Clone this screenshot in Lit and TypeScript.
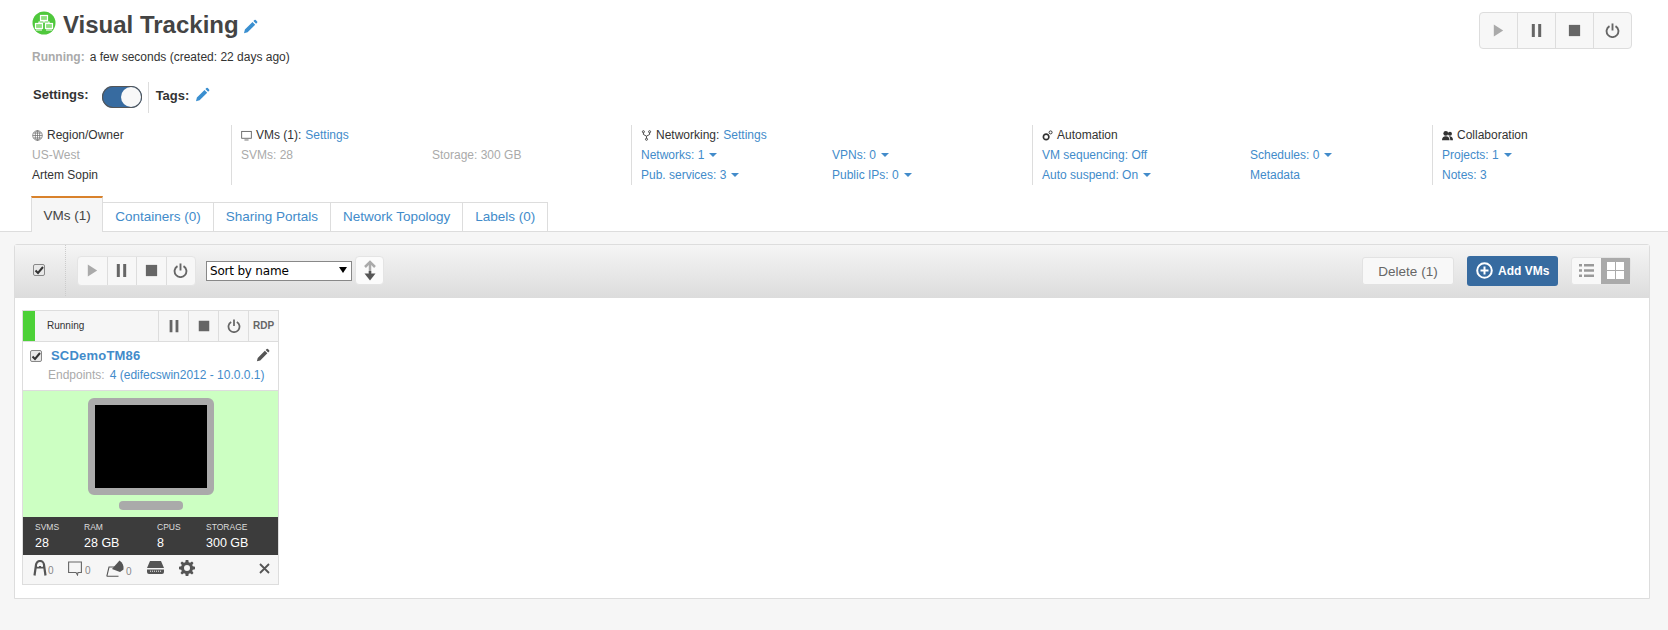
import { LitElement, html, css, svg } from "lit";
import { customElement } from "lit/decorators.js";

const pencil = svg`<path d="M2 14.2l.9-3.6 7.6-7.6 2.7 2.7-7.6 7.6zM11.4 2.1l1-1a1 1 0 0 1 1.4 0l1.300 1.300a1 1 0 0 1 0 1.400l-1 1z"/>`;
const play = svg`<path d="M3 1.500l10 6.500-10 6.500z"/>`;
const pause = svg`<path d="M3 1h3.200v14H3zM9.800 1H13v14H9.800z"/>`;
const stop = svg`<path d="M2 2h12v12H2z"/>`;
const power = svg`<path d="M4.800 3.300a6.300 6.300 0 1 0 6.400 0" fill="none" stroke="currentColor" stroke-width="2"/><path d="M7 .5h2v7.500H7z"/>`;
const ic = (p: unknown, cls = "") => html`<svg class="ic ${cls}" viewBox="0 0 16 16" fill="currentColor">${p}</svg>`;
const caret = html`<i class="caret"></i>`;

@customElement("app-root")
export class AppRoot extends LitElement {
  static styles = css`
    :host { display: block; width: 1668px; height: 630px; overflow: hidden; background: #f6f6f6; font: 12px/20px "Liberation Sans", Arial, sans-serif; color: #333; }
    a { color: #428bca; text-decoration: none; }
    .ic { display: block; }
    .head { background: #fff; height: 232px; box-sizing: border-box; padding: 11px 0 0 32px; border-bottom: 1px solid #ddd; position: relative; }
    .toprow { display: flex; justify-content: space-between; align-items: flex-start; padding-right: 36px; height: 38px; }
    .title { display: flex; align-items: center; height: 24px; }
    .title h1 { margin: 3px 0 0 7px; font-size: 24px; line-height: 24px; font-weight: bold; color: #444; }
    .title .ic { width: 16px; height: 16px; color: #3a8fd0; margin: 7px 0 0 3px; }
    .btns { display: flex; border: 1px solid #ddd; border-radius: 4px; background: #f7f7f7; margin-top: 1px; }
    .btns span { width: 37px; height: 35px; display: flex; align-items: center; justify-content: center; color: #666; border-left: 1px solid #ddd; }
    .btns span:first-child { border-left: 0; }
    .btns .ic { width: 15px; height: 15px; }
    .btns .dim { color: #aaa; }
    .running { height: 20px; margin-top: -2px; display: flex; gap: 5px; }
    .running b { color: #aaa; }
    .settings { display: flex; align-items: center; height: 31px; margin-top: 15px; padding-left: 1px; font-weight: bold; font-size: 13px; }
    .settings .lbl { padding-bottom: 6px; }
    .toggle { width: 40px; height: 22px; border-radius: 11px; background: #376ba0; margin: 0 0 2px 13px; border: 0; position: relative; box-shadow: inset 0 0 0 1px #555; }
    .toggle i { position: absolute; right: 1px; top: 1px; width: 20px; height: 20px; border-radius: 50%; background: #f8f8f8; }
    .vsep { width: 1px; height: 31px; background: #ddd; margin: 0 7px 0 6px; }
    .settings .ic { width: 16px; height: 16px; color: #3a8fd0; margin: 0 0 6px 5px; }
    .stats { display: grid; grid-template-columns: 199px 400px 401px 400px 200px; margin-top: 12px; height: 60px; }
    .col { border-left: 1px solid #ddd; padding-left: 9px; display: grid; align-content: start; grid-auto-rows: 20px; }
    .col:first-child { border: 0; padding-left: 0; }
    .c2 { grid-template-columns: 191px 1fr; }
    .c3 { grid-template-columns: 208px 1fr; }
    .h { display: flex; align-items: center; gap: 4px; grid-column: 1 / -1; white-space: nowrap; }
    .h .ic { width: 11px; height: 11px; color: #444; }
    .mute { color: #aaa; }
    .caret { display: inline-block; border: 4px solid transparent; border-top-color: #428bca; border-bottom: 0; margin-left: 5px; vertical-align: 2px; }
    .tabs { display: flex; align-items: flex-end; position: absolute; left: 31px; bottom: -1px; }
    .tabs a { display: block; height: 28px; line-height: 28px; padding: 0 12px; font-size: 13.5px; border: 1px solid #ddd; border-left: 0; background: #fff; }
    .tabs a.on { height: 34px; line-height: 36px; color: #444; background: #f6f6f6; border-top: 2px solid #d9822b; border-bottom: 0; border-left: 1px solid #ddd; padding: 0 11.5px; }
    .panel { margin: 12px 18px 0 14px; border: 1px solid #ddd; border-radius: 3px 3px 0 0; background: #fff; height: 355px; box-sizing: border-box; }
    .bar { height: 53px; background: linear-gradient(#f5f5f5, #dcdcdc); display: flex; align-items: center; box-sizing: border-box; padding-bottom: 2px; }
    .cbbox { width: 12px; height: 12px; border: 1px solid #888; border-radius: 2px; background: #e8e8e8; display: flex; align-items: center; justify-content: center; box-sizing: border-box; color: #333; flex: none; }
    .cbbox svg { width: 10px; height: 10px; display: block; }
    .barcheck { width: 51px; height: 51px; display: flex; align-items: center; justify-content: center; border-right: 1px dotted #ccc; box-sizing: border-box; margin-right: 11px; padding: 0 8px 2px 5px; }
    .btns2 { display: flex; border-radius: 4px; background: #f7f7f7; border: 1px solid #e4e4e4; margin-right: 10px; }
    .btns2 span { width: 28.500px; height: 28px; display: flex; align-items: center; justify-content: center; color: #666; border-left: 1px solid #ddd; }
    .btns2 span:first-child { border: 0; }
    .btns2 .ic { width: 15px; height: 15px; }
    .btns2 .dim { color: #aaa; }
    .selwrap { position: relative; display: block; width: 146px; height: 20px; }
    .selwrap::after { content: ""; position: absolute; right: 5px; top: 6px; border: 4px solid transparent; border-top: 6px solid #000; border-bottom: 0; pointer-events: none; }
    select { appearance: none; display: block; width: 146px; height: 20px; font: 12px "DejaVu Sans", sans-serif; letter-spacing: -.2px; background: #fff; border: 1px solid #888; padding: 0 0 0 3px; color: #000; border-radius: 0; }
    .sort { width: 29px; height: 29px; border: 1px solid #e4e4e4; border-radius: 4px; background: #fbfbfb; margin-left: 3px; display: flex; align-items: center; justify-content: center; box-sizing: border-box; }
    .sort svg { width: 14px; height: 21px; display: block; }
    .right { margin-left: auto; display: flex; align-items: center; margin-right: 18px; }
    .del { width: 92px; height: 28px; line-height: 27px; text-align: center; font-size: 13.5px; border: 1px solid #e2e2e2; border-radius: 3px; background: #f8f8f8; color: #666; box-sizing: border-box; }
    .add { width: 91px; height: 30px; margin-left: 13px; background: #376ba0; border-radius: 3px; color: #fff; font-weight: bold; display: flex; align-items: center; gap: 5px; padding-left: 9px; box-sizing: border-box; }
    .add svg { width: 17px; height: 17px; display: block; }
    .view { display: flex; margin-left: 13px; border: 1px solid #e4e4e4; border-radius: 3px; background: #f8f8f8; height: 28px; box-sizing: border-box; }
    .view span { width: 29px; display: flex; align-items: center; justify-content: center; color: #999; }
    .view span.on { background: #aaa; color: #fff; }
    .view svg { width: 17px; height: 17px; display: block; }
    .card { margin: 12px 0 0 7px; width: 255px; border: 1px solid #ddd; background: #fff; }
    .status { height: 30px; background: #f6f6f6; border-bottom: 1px solid #ddd; display: flex; align-items: center; font-size: 10px; }
    .status .stripe { width: 12px; height: 30px; background: #4cd137; }
    .status .lab { margin-left: 12px; flex: 1; }
    .status .b { width: 29px; height: 30px; border-left: 1px solid #ddd; display: flex; align-items: center; justify-content: center; color: #666; font-weight: bold; font-size: 10px; }
    .status .b .ic { width: 14px; height: 14px; }
    .info { height: 48px; border-bottom: 1px solid #ddd; }
    .info .top { display: flex; align-items: center; padding: 3px 8px 0 7px; height: 21px; }
    .info .name { font-size: 13px; font-weight: bold; color: #428bca; margin-left: 9px; flex: 1; letter-spacing: .2px; }
    .info .top .ic { width: 15px; height: 15px; color: #555; }
    .info .ep { padding-left: 25px; display: flex; gap: 5px; font-size: 12px; line-height: 18px; }
    .screen { height: 126px; background: #ccffc2; display: flex; flex-direction: column; align-items: center; box-sizing: border-box; padding-top: 7px; }
    .mon { width: 112px; height: 83px; background: #000; border: 7px solid #aaa; border-radius: 6px; }
    .foot { width: 64px; height: 9px; background: #aaa; border-radius: 4px; margin-top: 6px; }
    .dark { height: 38px; background: #3c3c3c; color: #fff; display: grid; grid-template-columns: 49px 73px 49px 1fr; padding-left: 12px; align-content: center; }
    .dark small { display: block; font-size: 8.500px; line-height: 12px; color: #ddd; }
    .dark b { display: block; font-size: 12.500px; font-weight: normal; line-height: 17px; margin-top: 2px; }
    .tools { height: 29px; background: #f6f6f6; display: flex; align-items: center; padding: 0 0 3px 10px; box-sizing: border-box; font-size: 10px; }
    .tools .t { display: flex; align-items: flex-end; }
    .tools svg { display: block; }
    .tools .n { line-height: 11px; color: #888; margin-left: 1px; }
  `;

  render() {
    const check = html`<span class="cbbox"><svg viewBox="0 0 10 10"><path d="M1.500 5.500l2.500 2.500 5-6" fill="none" stroke="currentColor" stroke-width="2"/></svg></span>`;
    return html`
      <div class="head">
        <div class="toprow">
          <div class="title">
            <svg width="24" height="24" viewBox="0 0 24 24" style="display:block">
              <circle cx="12" cy="12" r="11.500" fill="#4fc83c"/>
              <g fill="#8fe07f" stroke="#fff" stroke-width="1.200"><rect x="8.500" y="4.500" width="7" height="5"/><rect x="3.500" y="12.500" width="7" height="5"/><rect x="13.500" y="12.500" width="7" height="5"/></g>
              <path d="M12 9.500v1.500M7 12.500V11h10v1.500M4 19h6M14 19h6" fill="none" stroke="#fff" stroke-width="1.200"/>
            </svg>
            <h1>Visual Tracking</h1>
            ${ic(pencil)}
          </div>
          <div class="btns">
            <span class="dim">${ic(play)}</span><span>${ic(pause)}</span><span>${ic(stop)}</span><span>${ic(power)}</span>
          </div>
        </div>
        <div class="running"><b>Running:</b> <span>a few seconds (created: 22 days ago)</span></div>
        <div class="settings">
          <span class="lbl">Settings:</span><span class="toggle"><i></i></span><span class="vsep"></span><span class="lbl" style="padding-bottom:4px">Tags:</span>${ic(pencil)}
        </div>
        <div class="stats">
          <div class="col">
            <div class="h"><svg class="ic" viewBox="0 0 16 16" fill="none" stroke="#666" stroke-width="1"><circle cx="8" cy="8" r="7"/><ellipse cx="8" cy="8" rx="3.200" ry="7"/><path d="M1 8h14M2 4.500h12M2 11.500h12M8 1v14"/></svg>Region/Owner</div>
            <div class="mute">US-West</div>
            <div>Artem Sopin</div>
          </div>
          <div class="col c2">
            <div class="h"><svg class="ic" viewBox="0 0 16 16" fill="none" stroke="#555" stroke-width="1.200"><rect x="1" y="2" width="14" height="10"/><path d="M5 14.500h6"/></svg>VMs (1): <a href="#">Settings</a></div>
            <div class="mute">SVMs: 28</div><div class="mute">Storage: 300 GB</div>
          </div>
          <div class="col c2">
            <div class="h"><svg class="ic" viewBox="0 0 16 16" fill="none" stroke="#444" stroke-width="1.400"><circle cx="3.500" cy="2.500" r="1.500"/><circle cx="12.500" cy="2.500" r="1.500"/><circle cx="8" cy="13.500" r="1.500"/><path d="M3.500 4v2.500L8 9l4.500-2.500V4M8 9v3"/></svg>Networking: <a href="#">Settings</a></div>
            <a href="#">Networks: 1${caret}</a><a href="#">VPNs: 0${caret}</a>
            <a href="#">Pub. services: 3${caret}</a><a href="#">Public IPs: 0${caret}</a>
          </div>
          <div class="col c3">
            <div class="h"><svg class="ic" viewBox="0 0 16 16"><circle cx="6" cy="10" r="4" fill="none" stroke="#333" stroke-width="2.400"/><circle cx="12.500" cy="3.500" r="2.200" fill="none" stroke="#333" stroke-width="1.400"/></svg>Automation</div>
            <a href="#">VM sequencing: Off</a><a href="#">Schedules: 0${caret}</a>
            <a href="#">Auto suspend: On${caret}</a><a href="#">Metadata</a>
          </div>
          <div class="col">
            <div class="h"><svg class="ic" viewBox="0 0 16 16" fill="#333"><circle cx="5.500" cy="5" r="3.500"/><circle cx="11.500" cy="5.500" r="3"/><path d="M0 15c0-4 2-6 5.500-6s5.500 2 5.500 6zM12 15c0-2.500-.5-4.500-2-6 3.500-.5 6 1.500 6 6z"/></svg>Collaboration</div>
            <a href="#">Projects: 1${caret}</a>
            <a href="#">Notes: 3</a>
          </div>
        </div>
        <div class="tabs">
          <a class="on">VMs (1)</a><a href="#">Containers (0)</a><a href="#">Sharing Portals</a><a href="#">Network Topology</a><a href="#">Labels (0)</a>
        </div>
      </div>
      <div class="panel">
        <div class="bar">
          <div class="barcheck">${check}</div>
          <div class="btns2"><span class="dim">${ic(play)}</span><span>${ic(pause)}</span><span>${ic(stop)}</span><span>${ic(power)}</span></div>
          <span class="selwrap"><select><option>Sort by name</option></select></span>
          <div class="sort"><svg viewBox="0 0 14 21"><path d="M2 7l5-5 5 5" fill="none" stroke="#aaa" stroke-width="2.500"/><path d="M7 3v10" stroke="#aaa" stroke-width="2.500"/><path d="M7 11v6" stroke="#555" stroke-width="2.500"/><path d="M1.500 13.500h11L7 20.500z" fill="#555"/></svg></div>
          <div class="right">
            <div class="del">Delete (1)</div>
            <div class="add"><svg viewBox="0 0 17 17"><circle cx="8.500" cy="8.500" r="7.300" fill="none" stroke="#fff" stroke-width="2"/><path d="M4.500 7.500h8v2h-8zM7.500 4.500h2v8h-2z" fill="#fff"/></svg>Add VMs</div>
            <div class="view">
              <span><svg viewBox="0 0 17 17" fill="currentColor"><path d="M1 2h3v2.500H1zM6 2h10v2.500H6zM1 7.200h3v2.500H1zM6 7.200h10v2.500H6zM1 12.500h3V15H1zM6 12.500h10V15H6z"/></svg></span>
              <span class="on"><svg viewBox="0 0 17 17" fill="currentColor"><path d="M0 0h8v8H0zM9 0h8v8H9zM0 9h8v8H0zM9 9h8v8H9z"/></svg></span>
            </div>
          </div>
        </div>
        <div class="card">
          <div class="status">
            <span class="stripe"></span><span class="lab">Running</span>
            <span class="b">${ic(pause)}</span><span class="b">${ic(stop)}</span><span class="b">${ic(power)}</span><span class="b">RDP</span>
          </div>
          <div class="info">
            <div class="top">${check}<span class="name">SCDemoTM86</span>${ic(pencil)}</div>
            <div class="ep"><span class="mute">Endpoints:</span><a href="#">4 (edifecswin2012 - 10.0.0.1)</a></div>
          </div>
          <div class="screen"><div class="mon"></div><div class="foot"></div></div>
          <div class="dark">
            <div><small>SVMS</small><b>28</b></div><div><small>RAM</small><b>28 GB</b></div><div><small>CPUS</small><b>8</b></div><div><small>STORAGE</small><b>300 GB</b></div>
          </div>
          <div class="tools">
            <span class="t" style="width:35px"><svg width="14" height="16" viewBox="0 0 14 16"><path d="M1.500 15.500L3 5a4 4 0 0 1 8 0l1.500 10.500" fill="none" stroke="#555" stroke-width="2.200"/><path d="M3 6h8v2.500H3z" fill="#555"/><circle cx="5" cy="6" r="1" fill="#fff"/><circle cx="9" cy="6" r="1" fill="#fff"/></svg><span class="n">0</span></span>
            <span class="t" style="width:38px"><svg width="14" height="15" viewBox="0 0 14 15" fill="none" stroke="#666" stroke-width="1.100"><path d="M.6 1h12.800v10.500H10l-.5 2.500-1.500-2.500H.6z"/></svg><span class="n" style="margin-left:3px">0</span></span>
            <span class="t" style="width:41px"><svg width="18" height="17" viewBox="0 0 18 17"><path d="M.8 16.300L3 7h6M.8 16.300H12.500" fill="none" stroke="#555" stroke-width="1.100"/><path d="M6 9l7.500-8.500c3 2 4.500 5 4 9L14 12z" fill="#555"/></svg><span class="n" style="margin-left:2px">0</span></span>
            <span class="t" style="width:32px"><svg width="17" height="15" viewBox="0 0 17 15" fill="#555"><path d="M3 0h11l3 7H0zM0 8.500h17V11a2 2 0 0 1-2 2H2a2 2 0 0 1-2-2z"/><path d="M3 10.200h11" stroke="#f6f6f6" stroke-width="1" stroke-dasharray="1 1"/></svg></span>
            <span class="t" style="flex:1"><svg width="16" height="16" viewBox="0 0 16 16" fill="#555"><path fill-rule="evenodd" d="M6.700 0h2.600l.4 2.200 1.400.6L13 1.500l1.500 1.500-1.300 1.900.6 1.400 2.200.4v2.600l-2.200.4-.6 1.400 1.300 1.900L13 14.500l-1.900-1.300-1.400.6-.4 2.200H6.700l-.4-2.200-1.400-.6L3 14.500 1.500 13l1.300-1.900-.6-1.400L0 9.300V6.700l2.200-.4.6-1.400L1.500 3 3 1.500l1.900 1.300 1.400-.6zM8 5a3 3 0 1 0 0 6 3 3 0 0 0 0-6z"/></svg></span>
            <span class="t" style="margin-right:8px"><svg width="11" height="11" viewBox="0 0 11 11" stroke="#555" stroke-width="1.800"><path d="M1 1l9 9M10 1l-9 9"/></svg></span>
          </div>
        </div>
      </div>
    `;
  }
}
